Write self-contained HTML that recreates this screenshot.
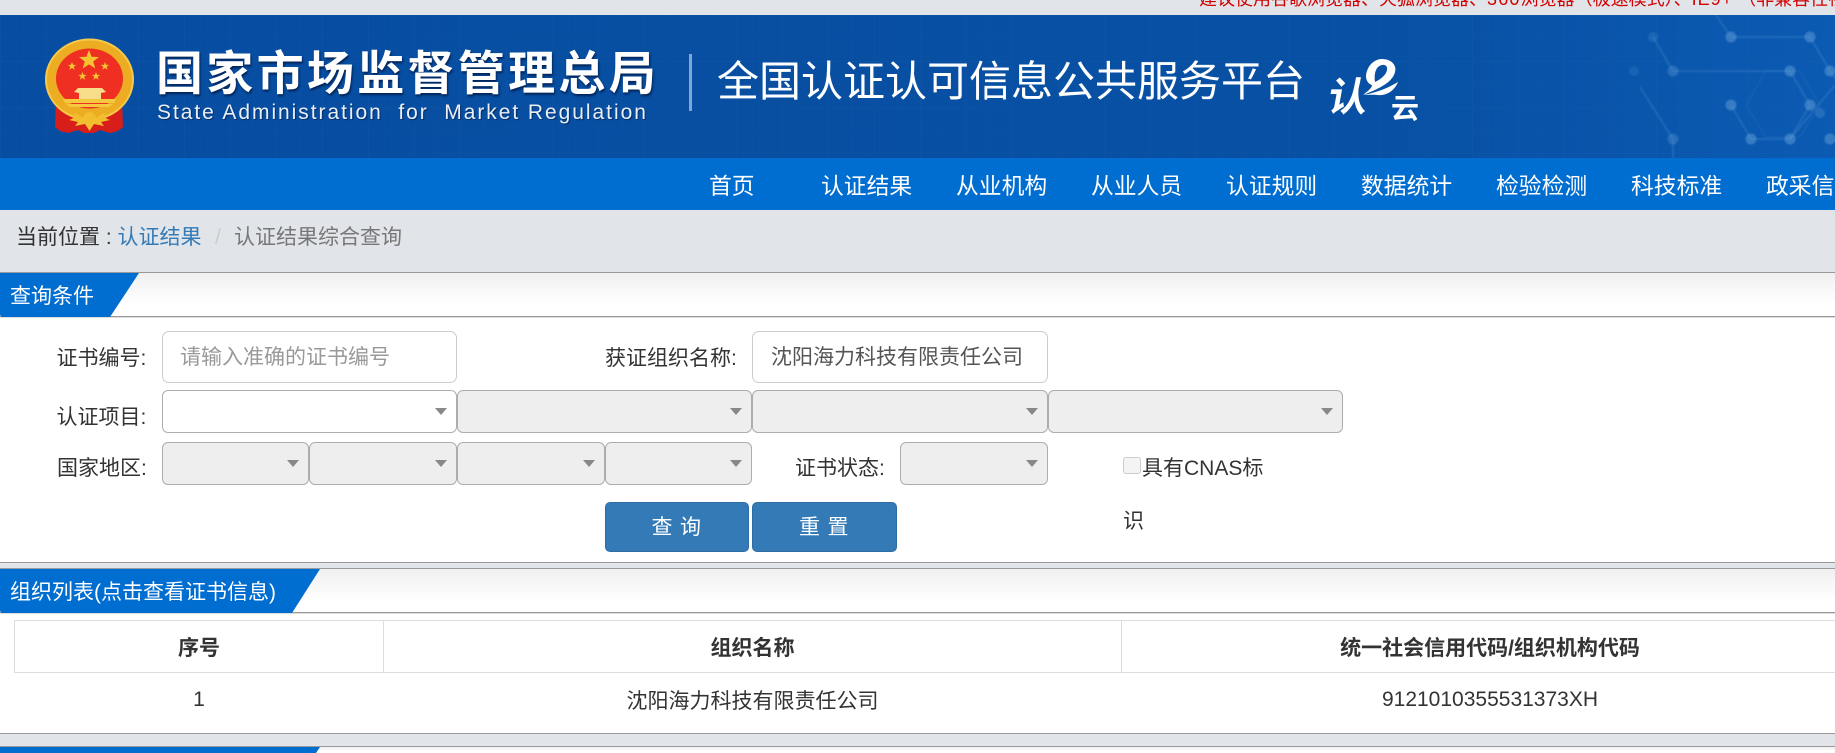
<!DOCTYPE html>
<html lang="zh-CN">
<head>
<meta charset="utf-8">
<title>全国认证认可信息公共服务平台</title>
<style>
*{box-sizing:border-box}
html,body{margin:0;padding:0;width:1835px;height:753px;overflow:hidden;background:#e1e5e9}
body{position:relative;font-family:"Liberation Sans","Noto Sans CJK SC",sans-serif;font-size:21px;color:#333}
.a{position:absolute;white-space:nowrap}
.nav{top:160px;height:52px;line-height:52px;color:#fff;font-size:22.8px}
.panel{position:absolute;left:0;width:1835px;background:#fff;border-top:1px solid #999;border-bottom:1px solid #999}
.bar{position:absolute;left:0;width:1835px;height:44px;background:linear-gradient(#f0f0f0,#fff 75%);border-bottom:1px solid #999;box-shadow:0 1px 0 #ddd}
.lb{line-height:30px;height:30px}
.box{position:absolute;border:1px solid #ccc;border-radius:7px;background:#fff;height:52px;line-height:52px;padding-left:18px;color:#555}
.sel{position:absolute;height:43px;border:1px solid #adadad;border-radius:6px;background:#eee}
.sel.w{background:#fff}
.sel:after{content:"";position:absolute;right:9px;top:17px;border-left:6.5px solid transparent;border-right:6.5px solid transparent;border-top:7.500px solid #888}
.btn{position:absolute;top:502px;height:50px;background:#337ab7;border:1px solid #2e6da4;border-radius:5px;color:#fff;text-align:center;line-height:49px;letter-spacing:7.500px;text-indent:6px}
th,td{padding:0;text-align:center;font-weight:400}
</style>
</head>
<body>
<div class="a" style="left:1199px;top:-13px;font-size:18px;line-height:24px;color:#d20000">建议使用谷歌浏览器、火狐浏览器、<span style="letter-spacing:1.2px">360</span>浏览器（极速模式）、<span style="letter-spacing:1px">IE9+</span>&nbsp;（非兼容性视图）浏览</div>

<!-- header -->
<svg class="a" style="left:0;top:15px" width="1835" height="143" viewBox="0 0 1835 143">
<defs>
<linearGradient id="hg" x1="0" x2="1" y1="0" y2="0"><stop offset="0" stop-color="#074ea2"/><stop offset=".75" stop-color="#0850a3"/><stop offset="1" stop-color="#0b5ab3"/></linearGradient>
<pattern id="grid" width="46" height="46" patternUnits="userSpaceOnUse"><path d="M.5 0V46M0 .5H46" stroke="#2a6db8" stroke-opacity=".11" fill="none"/><path d="M23.500 0V46M0 23.500H46" stroke="#2a6db8" stroke-opacity=".05" fill="none"/></pattern>
<filter id="bl" x="-5%" y="-5%" width="110%" height="110%"><feGaussianBlur stdDeviation=".8"/></filter>
</defs>
<rect width="1835" height="143" fill="url(#hg)"/>
<rect width="1835" height="143" fill="url(#grid)"/>
<g filter="url(#bl)">
<g stroke="#5f9fd8" fill="none" stroke-width="1.800" stroke-opacity=".26">
<path d="M1731 22H1810L1835 64"/><path d="M1673 56H1790L1810 90L1790 124H1751L1731 90"/>
<path d="M1653 22L1673 56M1673 124L1640 72M1716 0L1731 22M1790 124L1835 70M1673 143V124"/>
<path d="M1746 90L1766 56H1800L1820 90L1800 122H1766Z" stroke-width="1" stroke-opacity=".16"/>
</g>
<g fill="#6aa6dc" fill-opacity=".45">
<circle cx="1731" cy="22" r="5.500"/><circle cx="1810" cy="22" r="5.500"/><circle cx="1653" cy="22" r="5" fill-opacity=".2"/>
<circle cx="1673" cy="56" r="5.500" fill-opacity=".3"/><circle cx="1790" cy="56" r="5.500"/><circle cx="1830" cy="56" r="5.500"/>
<circle cx="1634" cy="56" r="5" fill-opacity=".15"/><circle cx="1731" cy="90" r="5.500"/><circle cx="1810" cy="90" r="5.500"/>
<circle cx="1751" cy="124" r="5.500"/><circle cx="1790" cy="124" r="5.500"/><circle cx="1673" cy="124" r="5.500" fill-opacity=".3"/>
<circle cx="1830" cy="124" r="5.500"/><circle cx="1820" cy="98" r="5" fill-opacity=".25"/>
</g>
</g>
<rect x="689" y="39" width="3" height="57" fill="#7fa6d4"/>
<!-- emblem -->
<g transform="translate(0,-15)">
<path d="M56 102L55 127L60 131L68 133L78 130L84 133H94L100 130L110 133L118 131L123 127L122 102Z" fill="#d81e1a"/>
<ellipse cx="89.500" cy="79.500" rx="43.500" ry="40" fill="#ecad22" stroke="#f7c948" stroke-width="2"/>
<ellipse cx="89.500" cy="78.500" rx="33.500" ry="30" fill="#ee2f22"/>
<path d="M89 50l2.600 6.800 7.400.2-5.800 4.500 2.100 7-6.300-4.100-6.300 4.100 2.100-7-5.800-4.500 7.400-.2z" fill="#f5c531"/>
<path d="M72 62l1.100 2.900 3.100 0-2.500 1.900.9 3-2.600-1.800-2.600 1.800.9-3-2.500-1.900 3.100 0z" fill="#f5c531"/>
<path d="M105 62l1.100 2.900 3.100 0-2.500 1.900.9 3-2.600-1.800-2.600 1.800.9-3-2.500-1.900 3.100 0z" fill="#f5c531"/>
<path d="M82.500 72l1.100 2.900 3.100 0-2.500 1.900.9 3-2.600-1.800-2.600 1.800.9-3-2.500-1.900 3.100 0z" fill="#f5c531"/>
<path d="M96 72l1.100 2.900 3.100 0-2.500 1.900.9 3-2.600-1.800-2.600 1.800.9-3-2.500-1.900 3.100 0z" fill="#f5c531"/>
<path d="M78 88H102L106 92L101 93V99H79V93L74 92Z" fill="#f8dd8a"/>
<path d="M63 99H116L114 103H65Z" fill="#f5c93f"/>
<path d="M66 104H113L109 107H70Z" fill="#f5c93f"/>
<path d="M74 113Q80 114 82 119Q85 112 89.500 112Q94 112 97 119Q99 114 105 113Q103 118 110 120L101 122L104 126L94 124L89.500 131L85 124L75 126L78 122L69 120Q76 118 74 113Z" fill="#f2bd2e"/>
</g>
<!-- logo swoosh -->
<g transform="translate(0,-15)">
<path fill="#fff" d="M1366 76C1367 65 1375 59 1382 59C1392 59 1397 66 1395 72C1393 80 1385 85 1377 89C1373 91 1368 93 1363 95C1368 91 1372 88 1372 85C1368 84 1366 80 1366 76Z"/>
<path fill="#0850a3" d="M1378 67C1383 63 1388 65 1387 70C1386 75 1381 79 1375 82C1374 76 1375 70 1378 67Z"/>
<path fill="#fff" d="M1364 95C1378 92 1388 88 1398 82C1394 92 1385 96 1377 95C1372 94.500 1368 95 1364 95Z"/>
</g>
</svg>
<div class="a" style="left:156px;top:32px;font-size:47px;line-height:76px;font-weight:700;letter-spacing:3.300px;color:#fff;text-shadow:1px 2px 2px rgba(0,20,60,.75);font-family:'Noto Sans CJK SC','Liberation Sans',sans-serif">国家市场监督管理总局</div>
<div class="a" style="left:157px;top:100px;font-size:21px;line-height:26px;letter-spacing:1.950px;color:#e9eff7;text-shadow:1px 1px 1px rgba(0,20,60,.6);white-space:pre">State Administration  for  Market Regulation</div>
<div class="a" style="left:717px;top:49px;font-size:42px;line-height:60px;color:#fff;font-family:'Noto Sans CJK SC','Liberation Sans',sans-serif">全国认证认可信息公共服务平台</div>
<div class="a" style="left:1329px;top:74px;font-size:40px;line-height:40px;color:#fff;font-weight:700;transform:skewX(-10deg);font-family:'Noto Sans CJK SC',sans-serif">认</div>
<div class="a" style="left:1391px;top:92px;font-size:28px;line-height:30px;color:#fff;font-weight:700;font-family:'Noto Sans CJK SC',sans-serif">云</div>

<!-- nav -->
<div class="a" style="left:0;top:158px;width:1835px;height:52px;background:#006dd0"></div>
<div class="a nav" style="left:709px">首页</div>
<div class="a nav" style="left:821px">认证结果</div>
<div class="a nav" style="left:956px">从业机构</div>
<div class="a nav" style="left:1091px">从业人员</div>
<div class="a nav" style="left:1226px">认证规则</div>
<div class="a nav" style="left:1361px">数据统计</div>
<div class="a nav" style="left:1496px">检验检测</div>
<div class="a nav" style="left:1631px">科技标准</div>
<div class="a nav" style="left:1766px">政采信息</div>

<!-- breadcrumb -->
<div class="a" style="left:16px;top:223px;line-height:30px;color:#333">当前位置 : <span style="color:#337ab7">认证结果</span></div>
<div class="a" style="left:215px;top:223px;line-height:30px;color:#ccc">/</div>
<div class="a" style="left:234px;top:223px;line-height:30px;color:#777">认证结果综合查询</div>

<!-- panel 1 -->
<div class="panel" style="top:272px;height:291px"></div>
<div class="bar" style="top:273px"></div>
<svg class="a" style="left:0;top:273px" width="140" height="44"><path d="M0 0H139L110 44H3Q0 44 0 41Z" fill="#006dd0"/></svg>
<div class="a" style="left:10px;top:281px;line-height:32px;color:#fff">查询条件</div>

<div class="a lb" style="left:56.500px;top:344px">证书编号:</div>
<div class="box" style="left:162px;top:331px;width:295px;color:#999;padding-left:17px">请输入准确的证书编号</div>
<div class="a lb" style="left:605px;top:344px">获证组织名称:</div>
<div class="box" style="left:752px;top:331px;width:296px">沈阳海力科技有限责任公司</div>

<div class="a lb" style="left:56.500px;top:403px">认证项目:</div>
<div class="sel w" style="left:162px;top:390px;width:295px"></div>
<div class="sel" style="left:457px;top:390px;width:295px"></div>
<div class="sel" style="left:752px;top:390px;width:296px"></div>
<div class="sel" style="left:1048px;top:390px;width:295px"></div>

<div class="a lb" style="left:57px;top:454px">国家地区:</div>
<div class="sel" style="left:162px;top:442px;width:147px"></div>
<div class="sel" style="left:309px;top:442px;width:148px"></div>
<div class="sel" style="left:457px;top:442px;width:148px"></div>
<div class="sel" style="left:605px;top:442px;width:147px"></div>
<div class="a lb" style="left:795px;top:454px">证书状态:</div>
<div class="sel" style="left:900px;top:442px;width:148px"></div>
<div class="a" style="left:1123px;top:457px;width:18px;height:17px;background:#f4f4f4;border:1px solid #ccc;border-radius:3px"></div>
<div class="a lb" style="left:1142px;top:454px">具有CNAS标</div>
<div class="a lb" style="left:1123px;top:507px">识</div>
<div class="btn" style="left:605px;width:144px">查询</div>
<div class="btn" style="left:752px;width:145px">重置</div>

<!-- panel 2 -->
<div class="panel" style="top:568px;height:166px"></div>
<div class="bar" style="top:569px"></div>
<svg class="a" style="left:0;top:569px" width="322" height="44"><path d="M0 0H320L292 44H3Q0 44 0 41Z" fill="#006dd0"/></svg>
<div class="a" style="left:10px;top:577px;line-height:32px;color:#fff">组织列表(点击查看证书信息)</div>
<table class="a" style="left:14px;top:620px;width:1844px;border-collapse:collapse;table-layout:fixed;background:#fff">
<colgroup><col style="width:369px"><col style="width:738px"><col style="width:737px"></colgroup>
<tr style="height:52px"><th style="border:1px solid #ddd;font-weight:700">序号</th><th style="border:1px solid #ddd;font-weight:700">组织名称</th><th style="border:1px solid #ddd;font-weight:700">统一社会信用代码/组织机构代码</th></tr>
<tr style="height:54px"><td>1</td><td>沈阳海力科技有限责任公司</td><td>9121010355531373XH</td></tr>
</table>

<!-- panel 3 -->
<div class="panel" style="top:746px;height:20px"></div>
<div class="bar" style="top:747px;height:6px;border:0"></div>
<svg class="a" style="left:0;top:747px" width="322" height="6"><path d="M0 0H320L316 6H0Z" fill="#006dd0"/></svg>
</body>
</html>
